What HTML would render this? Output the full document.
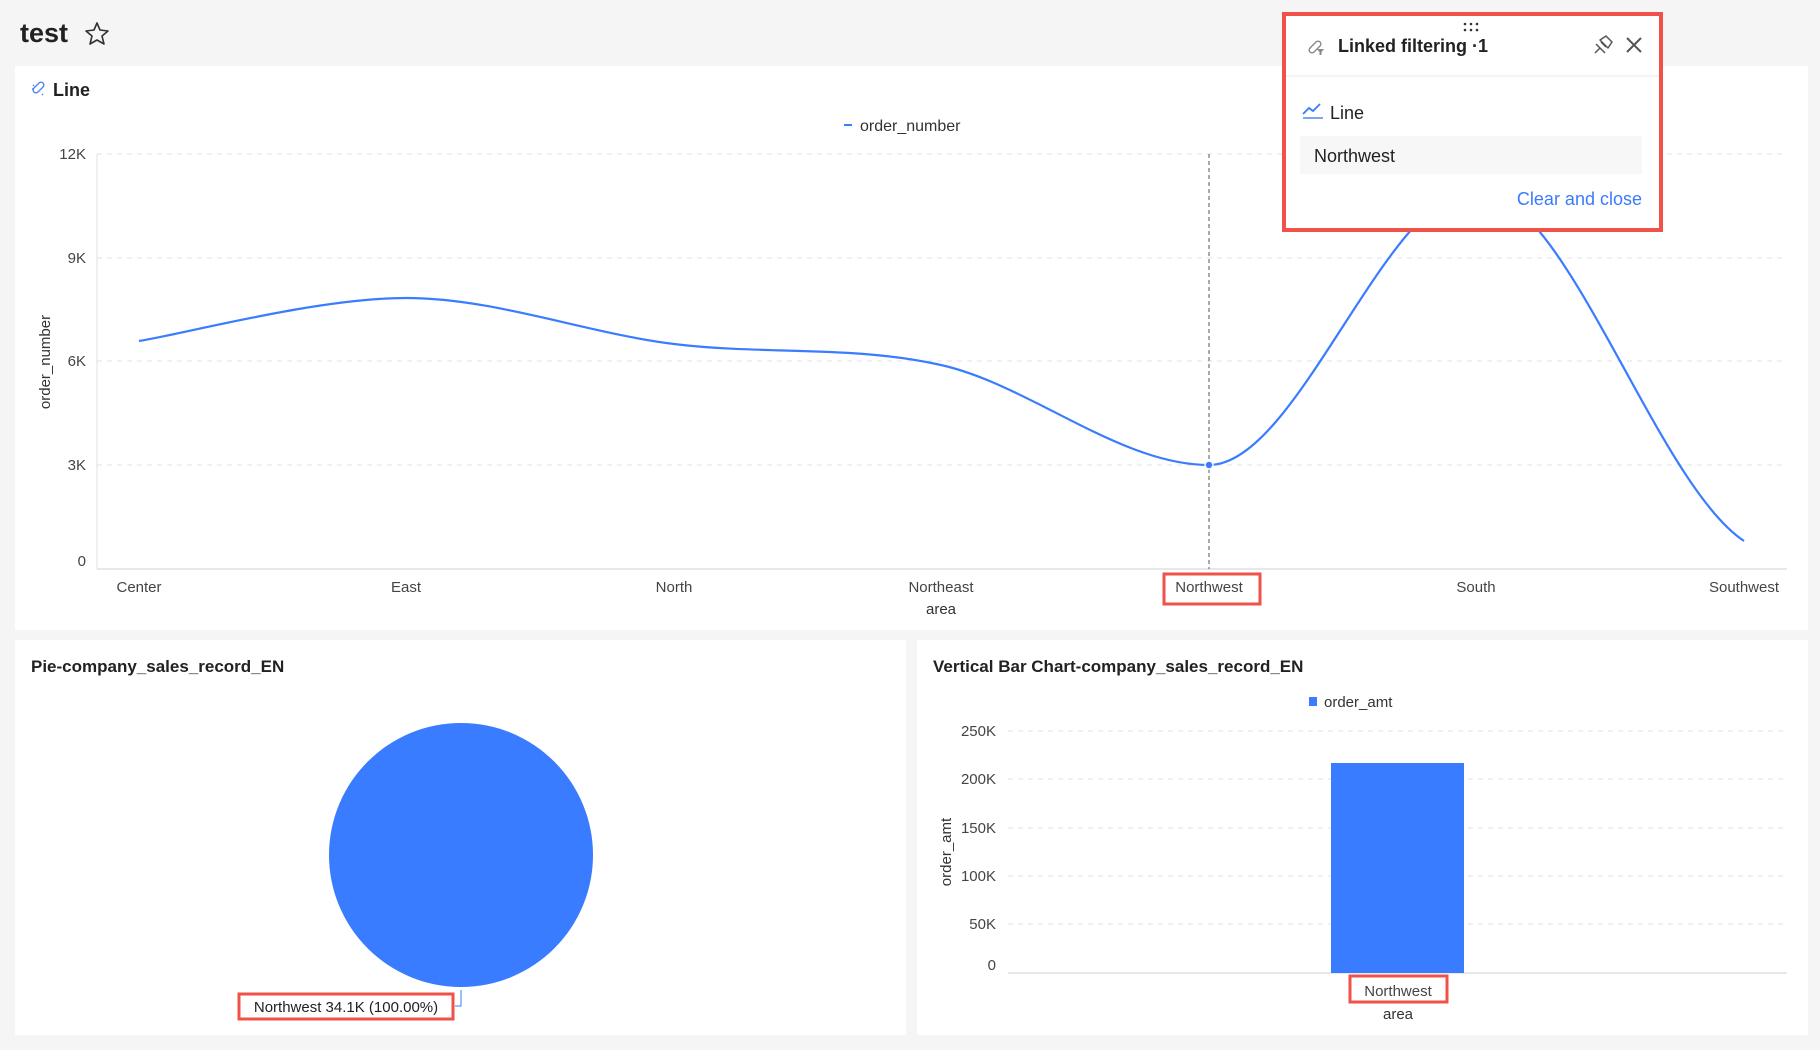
<!DOCTYPE html>
<html><head><meta charset="utf-8"><style>
html,body{margin:0;padding:0;}
body{width:1820px;height:1050px;background:#f5f5f5;position:relative;overflow:hidden;font-family:"Liberation Sans",sans-serif;}
.card{position:absolute;background:#fff;}
svg{position:absolute;left:0;top:0;}
</style></head><body>
<div class="card" style="left:15px;top:66px;width:1793px;height:564px"></div>
<div class="card" style="left:15px;top:640px;width:891px;height:395px"></div>
<div class="card" style="left:917px;top:640px;width:891px;height:395px"></div>
<svg width="1820" height="1050" viewBox="0 0 1820 1050" font-family="Liberation Sans, sans-serif">
<!-- header -->
<text x="20" y="42" font-size="27" font-weight="bold" fill="#222">test</text>
<path d="M97 23 L100 30 L108 31 L102 36 L104 44 L97 40 L90 44 L92 36 L86 31 L94 30 Z" fill="none" stroke="#333" stroke-width="1.6" stroke-linejoin="round"/>
<!-- Line card title -->
<g stroke="#4c86f0" stroke-width="1.4" fill="none"><path d="M34 88 l5 -5 a2.5 2.5 0 0 1 4 4 l-5 5 a2.5 2.5 0 0 1 -4 -4z"/><path d="M33 85 l1 1 M42 94 l1 1 M32 89h1"/></g>
<text x="53" y="96" font-size="18" font-weight="bold" fill="#222">Line</text>
<!-- legend -->
<line x1="844" y1="125" x2="852" y2="125" stroke="#3a7cff" stroke-width="2"/>
<text x="860" y="131" font-size="16" fill="#333">order_number</text>
<!-- grid -->
<g stroke="#e0e0e0" stroke-dasharray="5,5" stroke-width="1">
<line x1="97" y1="154" x2="1787" y2="154"/><line x1="97" y1="258" x2="1787" y2="258"/><line x1="97" y1="361" x2="1787" y2="361"/><line x1="97" y1="465" x2="1787" y2="465"/></g>
<line x1="97" y1="569" x2="1787" y2="569" stroke="#d0d0d0"/>
<line x1="97" y1="154" x2="97" y2="569" stroke="#e0e0e0"/>
<g font-size="15" fill="#444" text-anchor="end">
<text x="86" y="159">12K</text><text x="86" y="263">9K</text><text x="86" y="366">6K</text><text x="86" y="470">3K</text><text x="86" y="566">0</text></g>
<text transform="translate(50 362) rotate(-90)" font-size="15" fill="#333" text-anchor="middle">order_number</text>
<g font-size="15" fill="#444" text-anchor="middle">
<text x="139" y="592">Center</text><text x="406" y="592">East</text><text x="674" y="592">North</text><text x="941" y="592">Northeast</text><text x="1209" y="592">Northwest</text><text x="1476" y="592">South</text><text x="1744" y="592">Southwest</text>
<text x="941" y="614" fill="#333">area</text></g>
<rect x="1164" y="574" width="96" height="30" fill="none" stroke="#f0524a" stroke-width="3"/>
<line x1="1209" y1="154" x2="1209" y2="569" stroke="#555" stroke-dasharray="4,3"/>
<path d="M139 341 C184 334 317 298 406 298 C495 298 585 333 674 344 C763 355 852 345 941 365 C1030 385 1120 465 1209 465 C1298 465 1387 189 1476 189 C1565 189 1655 482 1744 541" fill="none" stroke="#3a7cff" stroke-width="2.2"/>
<circle cx="1209" cy="465" r="4" fill="#3a7cff" stroke="#fff" stroke-width="1.5"/>
<!-- pie -->
<text x="31" y="672" font-size="17" font-weight="bold" fill="#222">Pie-company_sales_record_EN</text>
<circle cx="461" cy="855" r="132" fill="#3a7cff"/>
<path d="M461 990 V1006 H455" fill="none" stroke="#3a7cff" stroke-width="1"/>
<rect x="239" y="994" width="214" height="25" fill="#fff" stroke="#f0524a" stroke-width="3"/>
<text x="346" y="1012" font-size="15" fill="#222" text-anchor="middle">Northwest 34.1K (100.00%)</text>
<!-- bar -->
<text x="933" y="672" font-size="17" font-weight="bold" fill="#222">Vertical Bar Chart-company_sales_record_EN</text>
<rect x="1309" y="697" width="8" height="9" fill="#3a7cff"/>
<text x="1324" y="707" font-size="15" fill="#333">order_amt</text>
<g stroke="#e0e0e0" stroke-dasharray="5,5">
<line x1="1008" y1="731" x2="1787" y2="731"/><line x1="1008" y1="779" x2="1787" y2="779"/><line x1="1008" y1="828" x2="1787" y2="828"/><line x1="1008" y1="876" x2="1787" y2="876"/><line x1="1008" y1="924" x2="1787" y2="924"/></g>
<line x1="1008" y1="973" x2="1787" y2="973" stroke="#d0d0d0"/>
<g font-size="15" fill="#444" text-anchor="end">
<text x="996" y="736">250K</text><text x="996" y="784">200K</text><text x="996" y="833">150K</text><text x="996" y="881">100K</text><text x="996" y="929">50K</text><text x="996" y="970">0</text></g>
<text transform="translate(951 852) rotate(-90)" font-size="15" fill="#333" text-anchor="middle">order_amt</text>
<rect x="1331" y="763" width="133" height="210" fill="#3a7cff"/>
<rect x="1350" y="976" width="97" height="26" fill="#fff" stroke="#f0524a" stroke-width="3"/>
<text x="1398" y="996" font-size="15" fill="#444" text-anchor="middle">Northwest</text>
<text x="1398" y="1019" font-size="15" fill="#333" text-anchor="middle">area</text>
<!-- popup -->
<rect x="1284" y="14" width="377" height="216" fill="#fff" stroke="#f0524a" stroke-width="4"/>
<g fill="#333"><circle cx="1465" cy="24" r="1.3"/><circle cx="1471" cy="24" r="1.3"/><circle cx="1477" cy="24" r="1.3"/><circle cx="1465" cy="30" r="1.3"/><circle cx="1471" cy="30" r="1.3"/><circle cx="1477" cy="30" r="1.3"/></g>
<g stroke="#888" stroke-width="1.4" fill="none"><path d="M1310 48 l6 -6 a2.6 2.6 0 0 1 4 4 l-6 6 a2.6 2.6 0 0 1 -4 -4z"/></g>
<path d="M1317 49 h7 l-2.5 3 v3 h-2 v-3z" fill="#888"/>
<text x="1338" y="52" font-size="18" font-weight="bold" fill="#222">Linked filtering ·1</text>
<g stroke="#555" stroke-width="1.5" fill="none" stroke-linejoin="round">
<path d="M1595 53 l5 -5 M1596 44 l9 9 M1600 40 l6 -4 l6 6 l-4 6 z M1601 42 l5 5"/>
<path d="M1627 38 l14 14 M1641 38 l-14 14" stroke-width="2"/></g>
<line x1="1286" y1="76" x2="1659" y2="76" stroke="#e8e8e8"/>
<path d="M1303 118 h20" stroke="#7aa6f5" stroke-width="2"/>
<path d="M1303 114 l6 -6 l4 3 l7 -7" fill="none" stroke="#3a7cff" stroke-width="1.8"/>
<text x="1330" y="119" font-size="18" fill="#222">Line</text>
<rect x="1300" y="136" width="342" height="38" fill="#f7f7f7"/>
<text x="1314" y="162" font-size="18" fill="#222">Northwest</text>
<text x="1642" y="205" font-size="18" fill="#3a7afe" text-anchor="end">Clear and close</text>
</svg>
</body></html>
